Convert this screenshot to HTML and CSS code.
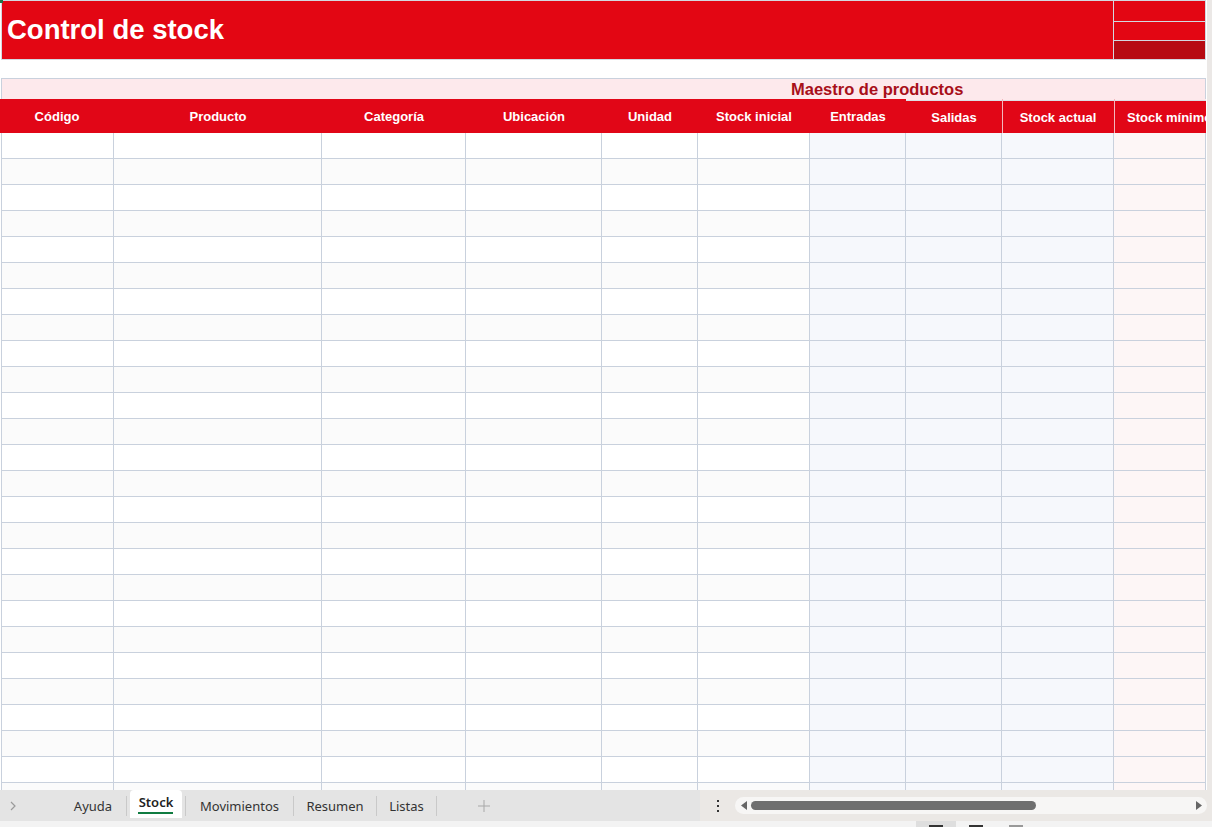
FILE: index.html
```html
<!DOCTYPE html>
<html lang="es">

<head>
    <meta charset="UTF-8">
    <meta name="viewport" content="width=device-width, initial-scale=1.0">
    <title>Control de stock</title>
    <link rel="stylesheet" href="styles.css">
</head>

<body>
    <div class="workspace">
        <div class="sheet">
            <span class="cursor"></span>
            <div class="title-row">
                <div class="title">Control de stock</div>
                <div class="title-side">
                    <div class="side-cell"></div>
                    <div class="side-cell"></div>
                    <div class="side-cell dark"></div>
                </div>
            </div>
            <div class="blank"></div>
            <div class="band">Maestro de productos</div>
            <div class="head">
                <div>Código</div>
                <div>Producto</div>
                <div>Categoría</div>
                <div>Ubicación</div>
                <div>Unidad</div>
                <div>Stock inicial</div>
                <div class="tall">Entradas</div>
                <div class="low">Salidas</div>
                <div class="low sep">Stock actual</div>
                <div class="low sep">Stock mínimo</div>
            </div>
            <div class="rows">
                <div class="row"><div></div><div></div><div></div><div></div><div></div><div></div><div class="calc"></div><div class="calc"></div><div class="calc"></div><div class="min"></div></div>
                <div class="row"><div></div><div></div><div></div><div></div><div></div><div></div><div class="calc"></div><div class="calc"></div><div class="calc"></div><div class="min"></div></div>
                <div class="row"><div></div><div></div><div></div><div></div><div></div><div></div><div class="calc"></div><div class="calc"></div><div class="calc"></div><div class="min"></div></div>
                <div class="row"><div></div><div></div><div></div><div></div><div></div><div></div><div class="calc"></div><div class="calc"></div><div class="calc"></div><div class="min"></div></div>
                <div class="row"><div></div><div></div><div></div><div></div><div></div><div></div><div class="calc"></div><div class="calc"></div><div class="calc"></div><div class="min"></div></div>
                <div class="row"><div></div><div></div><div></div><div></div><div></div><div></div><div class="calc"></div><div class="calc"></div><div class="calc"></div><div class="min"></div></div>
                <div class="row"><div></div><div></div><div></div><div></div><div></div><div></div><div class="calc"></div><div class="calc"></div><div class="calc"></div><div class="min"></div></div>
                <div class="row"><div></div><div></div><div></div><div></div><div></div><div></div><div class="calc"></div><div class="calc"></div><div class="calc"></div><div class="min"></div></div>
                <div class="row"><div></div><div></div><div></div><div></div><div></div><div></div><div class="calc"></div><div class="calc"></div><div class="calc"></div><div class="min"></div></div>
                <div class="row"><div></div><div></div><div></div><div></div><div></div><div></div><div class="calc"></div><div class="calc"></div><div class="calc"></div><div class="min"></div></div>
                <div class="row"><div></div><div></div><div></div><div></div><div></div><div></div><div class="calc"></div><div class="calc"></div><div class="calc"></div><div class="min"></div></div>
                <div class="row"><div></div><div></div><div></div><div></div><div></div><div></div><div class="calc"></div><div class="calc"></div><div class="calc"></div><div class="min"></div></div>
                <div class="row"><div></div><div></div><div></div><div></div><div></div><div></div><div class="calc"></div><div class="calc"></div><div class="calc"></div><div class="min"></div></div>
                <div class="row"><div></div><div></div><div></div><div></div><div></div><div></div><div class="calc"></div><div class="calc"></div><div class="calc"></div><div class="min"></div></div>
                <div class="row"><div></div><div></div><div></div><div></div><div></div><div></div><div class="calc"></div><div class="calc"></div><div class="calc"></div><div class="min"></div></div>
                <div class="row"><div></div><div></div><div></div><div></div><div></div><div></div><div class="calc"></div><div class="calc"></div><div class="calc"></div><div class="min"></div></div>
                <div class="row"><div></div><div></div><div></div><div></div><div></div><div></div><div class="calc"></div><div class="calc"></div><div class="calc"></div><div class="min"></div></div>
                <div class="row"><div></div><div></div><div></div><div></div><div></div><div></div><div class="calc"></div><div class="calc"></div><div class="calc"></div><div class="min"></div></div>
                <div class="row"><div></div><div></div><div></div><div></div><div></div><div></div><div class="calc"></div><div class="calc"></div><div class="calc"></div><div class="min"></div></div>
                <div class="row"><div></div><div></div><div></div><div></div><div></div><div></div><div class="calc"></div><div class="calc"></div><div class="calc"></div><div class="min"></div></div>
                <div class="row"><div></div><div></div><div></div><div></div><div></div><div></div><div class="calc"></div><div class="calc"></div><div class="calc"></div><div class="min"></div></div>
                <div class="row"><div></div><div></div><div></div><div></div><div></div><div></div><div class="calc"></div><div class="calc"></div><div class="calc"></div><div class="min"></div></div>
                <div class="row"><div></div><div></div><div></div><div></div><div></div><div></div><div class="calc"></div><div class="calc"></div><div class="calc"></div><div class="min"></div></div>
                <div class="row"><div></div><div></div><div></div><div></div><div></div><div></div><div class="calc"></div><div class="calc"></div><div class="calc"></div><div class="min"></div></div>
                <div class="row"><div></div><div></div><div></div><div></div><div></div><div></div><div class="calc"></div><div class="calc"></div><div class="calc"></div><div class="min"></div></div>
                <div class="row"><div></div><div></div><div></div><div></div><div></div><div></div><div class="calc"></div><div class="calc"></div><div class="calc"></div><div class="min"></div></div>
            </div>
        </div>
        <div class="vscroll"></div>
    </div>

    <div class="tabbar">
        <div class="tabs">
            <div class="nav">
                <svg width="8" height="10" viewBox="0 0 8 10"><path d="M2 1l4 4-4 4" fill="none" stroke="#9a9a9a" stroke-width="1.2"/></svg>
            </div>
            <div class="tab w-ayuda">Ayuda</div>
            <span class="bar"></span>
            <div class="tab w-stock"><span class="active">Stock</span></div>
            <span class="bar"></span>
            <div class="tab w-mov">Movimientos</div>
            <span class="bar"></span>
            <div class="tab w-res">Resumen</div>
            <span class="bar"></span>
            <div class="tab w-lis">Listas</div>
            <span class="bar"></span>
            <div class="add">
                <svg width="12" height="12" viewBox="0 0 12 12"><path d="M6 0v12M0 6h12" stroke="#a8a8a8" stroke-width="1"/></svg>
            </div>
        </div>
        <div class="hscroll-area">
            <div class="more">
                <svg width="4" height="14" viewBox="0 0 4 14"><rect x="1" y="1" width="2" height="2" fill="#333"/><rect x="1" y="6" width="2" height="2" fill="#333"/><rect x="1" y="11" width="2" height="2" fill="#333"/></svg>
            </div>
            <div class="track">
                <svg class="arrow" width="7" height="9" viewBox="0 0 7 9"><path d="M6 0v9L0 4.5z" fill="#666"/></svg>
                <div class="thumb"></div>
                <svg class="arrow right" width="7" height="9" viewBox="0 0 7 9"><path d="M1 0v9l6-4.5z" fill="#666"/></svg>
            </div>
        </div>
    </div>

    <div class="status">
        <div class="views">
            <span class="view on"><i></i></span>
            <span class="view"><i></i></span>
            <span class="view faded"><i></i></span>
        </div>
    </div>
</body>

</html>
```

FILE: styles.css
```css
body {
    margin: 0;
    width: 1212px;
    height: 827px;
    overflow: hidden;
    background: #fff;
    font-family: "Liberation Sans", Arial, sans-serif;
}

.workspace {
    display: flex;
    height: 790px;
    overflow: hidden;
}

.sheet {
    position: relative;
    width: 1207px;
    flex: none;
    background: #fff;
    overflow: hidden;
}

.cursor {
    position: absolute;
    left: 0;
    top: 0;
    width: 3px;
    height: 3px;
    background: #217346;
}

.vscroll {
    flex: 1;
    background: #ebe8e6;
}

/* title block */

.title-row {
    display: flex;
    width: 1205px;
    height: 60px;
    margin-left: 1px;
    box-sizing: border-box;
    border-top: 1px solid #d3d8e0;
    border-bottom: 1px solid #d3d8e0;
}

.title {
    width: 1113px;
    box-sizing: border-box;
    border-left: 1px solid #d3d8e0;
    border-right: 1px solid #d3d8e0;
    background: #e30613;
    color: #fff;
    font-size: 27.5px;
    font-weight: bold;
    padding-left: 5px;
    display: flex;
    align-items: center;
    padding-bottom: 1px;
}

.title-side {
    width: 92px;
    box-sizing: border-box;
    border-right: 1px solid #d3d8e0;
    display: flex;
    flex-direction: column;
}

.side-cell {
    height: 18px;
    background: #e30613;
    border-top: 1px solid #d3d8e0;
}

.side-cell:first-child {
    height: 20px;
    border-top: 0;
}

.side-cell.dark {
    background: #b70a12;
}

.blank {
    height: 18px;
}

.band {
    width: 1205px;
    height: 21px;
    margin-left: 1px;
    box-sizing: border-box;
    border-top: 1px solid #c9d1dd;
    border-left: 1px solid #c9d1dd;
    border-right: 1px solid #c9d1dd;
    background: #fde9ec;
    color: #a80f19;
    font-size: 16.5px;
    font-weight: bold;
    padding-left: 789px;
    line-height: 20px;
}

/* column headers */

.head {
    display: grid;
    grid-template-columns: 114px 208px 144px 136px 96px 112px 96px 96px 112px 92px;
    height: 34px;
}

.head div {
    background: #e10617;
    color: #fff;
    font-size: 13px;
    font-weight: bold;
    display: flex;
    align-items: center;
    justify-content: center;
    white-space: nowrap;
    overflow: hidden;
    padding-top: 1px;
}

.head div:last-child {
    justify-content: flex-start;
    padding-left: 13px;
}

.head .low {
    background: linear-gradient(#fde9ec 0 1px, #dcdfe5 1px 2px, #e10617 2px);
    padding-top: 2px;
}

.head .sep {
    box-shadow: inset 1px 0 0 #f2b8bd;
}

/* body grid */

.row {
    display: grid;
    grid-template-columns: 113px 208px 144px 136px 96px 112px 96px 96px 112px 92px;
    height: 26px;
    margin-left: 1px;
}

.row div {
    box-sizing: border-box;
    border-right: 1px solid #c9d1dd;
    border-bottom: 1px solid #c9d1dd;
}

.row div:first-child {
    border-left: 1px solid #c9d1dd;
}

.row:nth-child(even) div {
    background: #fbfbfb;
}

.row div.calc {
    background: #f6f8fc;
}

.row div.min {
    background: #fdf6f6;
}

/* sheet tabs */

.tabbar {
    display: flex;
    height: 31px;
    font-family: "Noto Sans", "Open Sans", sans-serif;
    font-size: 13px;
    color: #333;
}

.tabs {
    width: 700px;
    display: flex;
    align-items: center;
    background: #e4e4e4;
}

.nav {
    width: 60px;
    padding-left: 9px;
    box-sizing: border-box;
    display: flex;
    align-items: center;
    padding-top: 1px;
}

.tab {
    height: 31px;
    display: flex;
    align-items: center;
    justify-content: center;
    box-sizing: border-box;
    padding-top: 1px;
}

.w-ayuda { width: 66px; }
.w-stock { width: 58px; }
.w-mov { width: 107px; }
.w-res { width: 82px; }
.w-lis { width: 59px; }

.tab .active {
    display: flex;
    align-items: center;
    justify-content: center;
    width: 52px;
    height: 28px;
    margin-top: -1px;
    align-self: flex-start;
    background: #fff;
    border-radius: 4px 4px 0 0;
    font-weight: 600;
    color: #222;
    position: relative;
    padding-bottom: 5px;
    box-sizing: border-box;
}

.tab .active::after {
    content: "";
    position: absolute;
    left: 8px;
    right: 9px;
    bottom: 4px;
    height: 2px;
    background: #107c41;
}

.bar {
    width: 1px;
    height: 20px;
    background: #c9c9c9;
}

.add {
    width: 94px;
    display: flex;
    justify-content: center;
}

.hscroll-area {
    flex: 1;
    display: flex;
    align-items: center;
    background: #ebe8e5;
}

.more {
    width: 35px;
    display: flex;
    justify-content: center;
    padding-left: 1px;
    box-sizing: border-box;
}

.track {
    width: 472px;
    height: 17px;
    background: #f7f6f5;
    border-radius: 9px;
    display: flex;
    align-items: center;
    padding: 0 5px 0 6px;
    box-sizing: border-box;
}

.arrow {
    flex: none;
}

.thumb {
    width: 285px;
    height: 9px;
    margin-left: 3px;
    background: #6f6f6f;
    border-radius: 5px;
}

.arrow.right {
    margin-left: auto;
}

/* status bar */

.status {
    height: 6px;
    background: #f3f3f3;
    position: relative;
}

.views {
    display: flex;
    margin-left: 916px;
    height: 6px;
}

.view {
    width: 40px;
    height: 6px;
    display: flex;
    justify-content: center;
    align-items: flex-end;
}

.view.on {
    background: #dedede;
}

.view i {
    width: 14px;
    height: 2px;
    background: #333;
}

.view.faded i {
    background: #999;
}
```
